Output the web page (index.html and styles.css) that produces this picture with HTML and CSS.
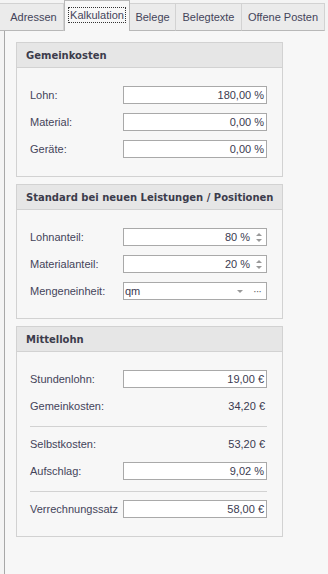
FILE: index.html
```html
<!DOCTYPE html>
<html lang="de">
<head>
    <meta charset="UTF-8">
    <title>Kalkulation</title>
    <link rel="stylesheet" href="styles.css">
</head>
<body>
    <div class="tabs">
        <div class="tab">Adressen</div>
        <div class="tab active"><span class="focus">Kalkulation</span></div>
        <div class="tab">Belege</div>
        <div class="tab">Belegtexte</div>
        <div class="tab">Offene Posten</div>
    </div>

    <div class="panel">
        <div class="group">
            <div class="group-header">Gemeinkosten</div>
            <div class="group-body">
                <div class="row"><span class="label">Lohn:</span><div class="field">180,00 %</div></div>
                <div class="row"><span class="label">Material:</span><div class="field">0,00 %</div></div>
                <div class="row"><span class="label">Geräte:</span><div class="field">0,00 %</div></div>
            </div>
        </div>

        <div class="group">
            <div class="group-header">Standard bei neuen Leistungen / Positionen</div>
            <div class="group-body">
                <div class="row">
                    <span class="label">Lohnanteil:</span>
                    <div class="field spin"><span class="value">80 %</span><span class="spinner"><i class="up"></i><i class="down"></i></span></div>
                </div>
                <div class="row">
                    <span class="label">Materialanteil:</span>
                    <div class="field spin"><span class="value">20 %</span><span class="spinner"><i class="up"></i><i class="down"></i></span></div>
                </div>
                <div class="row">
                    <span class="label">Mengeneinheit:</span>
                    <div class="field combo"><span class="value">qm</span><i class="down"></i><span class="dots">···</span></div>
                </div>
            </div>
        </div>

        <div class="group">
            <div class="group-header">Mittellohn</div>
            <div class="group-body">
                <div class="row"><span class="label">Stundenlohn:</span><div class="field">19,00 €</div></div>
                <div class="row"><span class="label">Gemeinkosten:</span><div class="plain">34,20 €</div></div>
                <div class="sep"></div>
                <div class="row"><span class="label">Selbstkosten:</span><div class="plain">53,20 €</div></div>
                <div class="row"><span class="label">Aufschlag:</span><div class="field">9,02 %</div></div>
                <div class="sep"></div>
                <div class="row"><span class="label">Verrechnungssatz</span><div class="field">58,00 €</div></div>
            </div>
        </div>
    </div>
</body>
</html>
```

FILE: styles.css
```css
* {
    margin: 0;
    padding: 0;
    box-sizing: border-box;
}

body {
    background: #f4f4f4;
    font-family: 'Liberation Sans', Arial, sans-serif;
    font-size: 11px;
    color: #44445a;
    height: 574px;
    display: flex;
    flex-direction: column;
    overflow: hidden;
}

.tabs {
    display: flex;
    height: 31px;
    padding-top: 3px;
    align-items: flex-end;
}

.tab {
    height: 28px;
    padding: 0 6px;
    display: flex;
    align-items: center;
    justify-content: center;
    white-space: nowrap;
    flex-shrink: 0;
    background: #ebebeb;
    border: 1px solid #d2d2d2;
    border-left: none;
    border-bottom: 1px solid #b8b8b8;
    color: #44445a;
}

.tab:first-child {
    width: 64px;
    padding-left: 10px;
}

.tab.active {
    height: 31px;
    margin-top: -3px;
    width: 66px;
    background: #f7f7f7;
    border: 1px solid #b8b8b8;
    border-bottom: none;
    padding: 0 4px 3px;
}

.tab:nth-child(3) { width: 46px; }
.tab:nth-child(4) { width: 66px; }
.tab:nth-child(5) { width: 83px; }

.focus {
    outline: 1px dotted #333;
    padding: 1px 1px;
}

.panel {
    flex: 1;
    margin-left: 4px;
    border-left: 1px solid #a8a8a8;
    background: #f7f7f7;
    padding: 11px 0 0 11px;
    display: flex;
    flex-direction: column;
    gap: 7px;
}

.group {
    width: 267px;
    border: 1px solid #d2d2d2;
}

.group-header {
    height: 25px;
    background: #e6e6e6;
    border-bottom: 1px solid #d2d2d2;
    padding-left: 9px;
    display: flex;
    align-items: center;
    font-family: 'DejaVu Sans', Verdana, sans-serif;
    font-size: 10px;
    font-weight: bold;
    white-space: nowrap;
    color: #3c3c4c;
}

.group-body {
    padding: 18px 15px 18px 13px;
    display: flex;
    flex-direction: column;
    gap: 9px;
}

.row {
    height: 18px;
    display: flex;
    align-items: center;
}

.label {
    width: 93px;
    flex-shrink: 0;
}

.field {
    flex: 1;
    height: 18px;
    background: #fff;
    border: 1px solid #a9a9a9;
    display: flex;
    align-items: center;
    justify-content: flex-end;
    padding-right: 2px;
    color: #3a3a50;
}

.plain {
    flex: 1;
    text-align: right;
    padding-right: 2px;
    color: #3a3a50;
}

.spin .value {
    margin-right: 4px;
}

.spinner {
    width: 10px;
    display: flex;
    flex-direction: column;
    align-items: center;
    gap: 3px;
}

.up, .down {
    display: block;
    width: 0;
    height: 0;
    border-left: 3px solid transparent;
    border-right: 3px solid transparent;
}

.up {
    border-bottom: 3px solid #999;
}

.down {
    border-top: 3px solid #999;
}

.combo {
    justify-content: flex-start;
    padding-left: 1px;
}

.combo .value {
    flex: 1;
}

.combo .down {
    margin-right: 10px;
}

.dots {
    color: #666;
    letter-spacing: -1px;
    margin-right: 3px;
}

.sep {
    height: 1px;
    background: #d2d2d2;
    margin: 2px 0 -1px;
}
```
